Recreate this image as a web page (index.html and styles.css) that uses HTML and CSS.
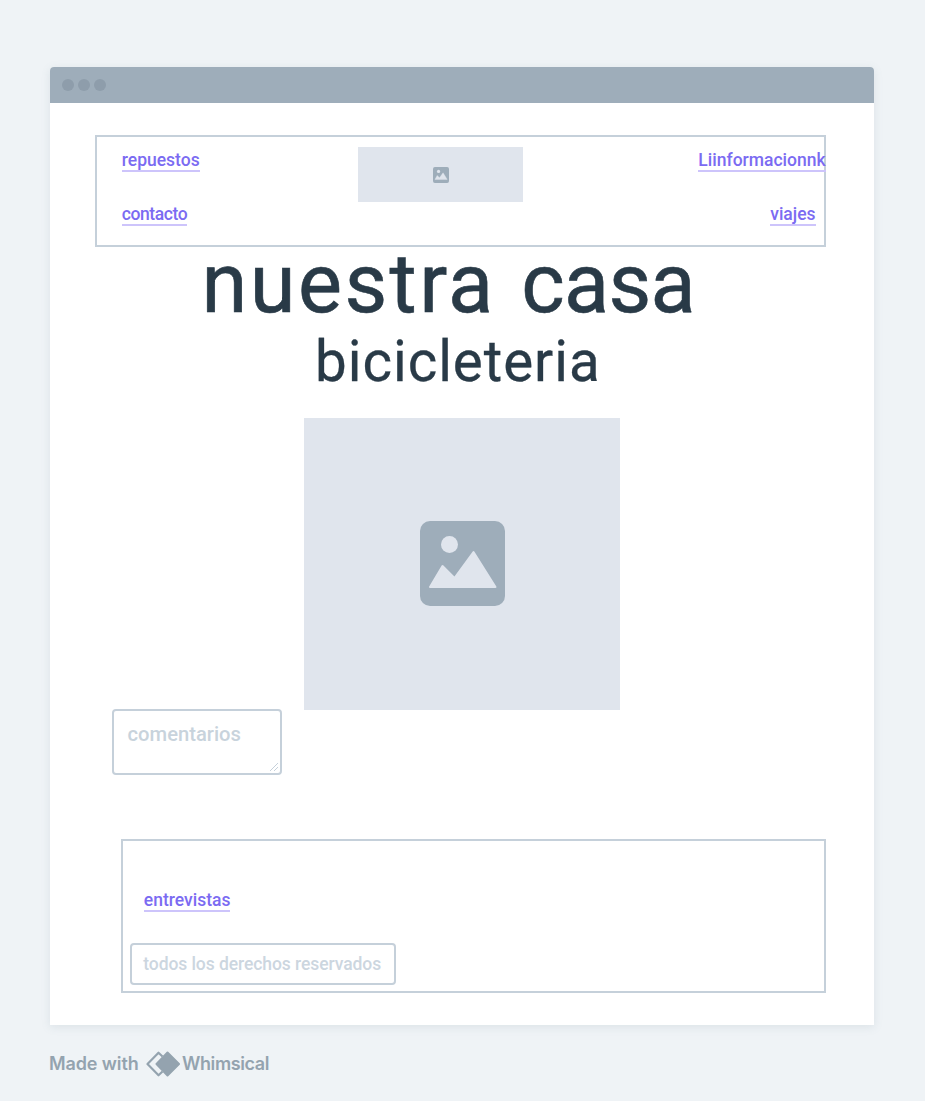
FILE: index.html
```html
<!DOCTYPE html>
<html lang="es">
<head>
<meta charset="utf-8">
<title>nuestra casa bicicleteria</title>
<link rel="stylesheet" href="styles.css">
</head>
<body>
<div class="window">
  <div class="titlebar"><span class="dot"></span><span class="dot"></span><span class="dot"></span></div>
  <main class="page">
    <nav class="nav">
      <div class="links-left">
        <a class="link repuestos">repuestos</a>
        <a class="link contacto">contacto</a>
      </div>
      <div class="logo-image">
        <svg class="icon-small" viewBox="0 0 85 85"><rect width="85" height="85" rx="10" fill="#9eadba"/><circle cx="29.500" cy="23.500" r="8.500" fill="#e0e5ed"/><path d="M10 66 L22.500 45 L34.500 57 L53.500 31 L75.500 66 Z" fill="#e0e5ed" stroke="#e0e5ed" stroke-width="2" stroke-linejoin="round"/></svg>
      </div>
      <div class="links-right">
        <a class="link info">Liinformacionnk</a>
        <a class="link viajes">viajes</a>
      </div>
    </nav>
    <h1 class="title"><span class="wide">nuestra</span> <span class="tight">casa</span></h1>
    <h2 class="subtitle">bicicleteria</h2>
    <div class="hero-image">
      <svg class="icon-large" viewBox="0 0 85 85"><rect width="85" height="85" rx="10" fill="#9eadba"/><circle cx="29.500" cy="23.500" r="8.500" fill="#e0e5ed"/><path d="M10 66 L22.500 45 L34.500 57 L53.500 31 L75.500 66 Z" fill="#e0e5ed" stroke="#e0e5ed" stroke-width="2" stroke-linejoin="round"/></svg>
    </div>
    <div class="comments">
      <span class="comments-text">comentarios</span>
      <svg class="grip" viewBox="0 0 10 10"><path d="M1 9 L9 1 M5 9 L9 5" stroke="#c6d1db" stroke-width="1" fill="none"/></svg>
    </div>
    <footer class="footer">
      <a class="link entrevistas">entrevistas</a>
      <div class="rights">todos los derechos reservados</div>
    </footer>
  </main>
</div>
<div class="credit">
  <span class="made">Made with</span>
  <svg class="mark" viewBox="0 0 34 26"><path d="M16.500 5.500 L12.500 1.700 L1.500 13 L12.500 24.300 L16.500 20.500" fill="none" stroke="#94a3af" stroke-width="2.200" stroke-linejoin="round"/><path d="M21.500 1.500 L33 13 L21.500 24.500 L10.500 13 Z" fill="#94a3af" stroke="#94a3af" stroke-width="2" stroke-linejoin="round"/></svg>
  <span class="brand">Whimsical</span>
</div>
</body>
</html>
```
FILE: styles.css
```css
* { box-sizing: border-box; }
body {
  margin: 0;
  padding: 66.500px 50.400px 0;
  height: 1101px;
  background: #eff3f6;
  font-family: Roboto, "Liberation Sans", sans-serif;
}
svg { display: block; }
.window {
  width: 824px;
  height: 958.500px;
  background: #fff;
  border-radius: 4px 4px 0 0;
  box-shadow: 0 2px 10px rgba(100, 125, 145, 0.14);
}
.titlebar {
  display: flex;
  align-items: center;
  gap: 4px;
  height: 36px;
  padding-left: 12.100px;
  background: #9eadba;
  border-radius: 4px 4px 0 0;
}
.dot { width: 12px; height: 12px; border-radius: 50%; background: #8e9dab; }
.page { display: flex; flex-direction: column; padding: 32.900px 48.500px 0 44.200px; }
.nav {
  display: flex;
  justify-content: space-between;
  width: 731.500px;
  height: 111.400px;
  padding-top: 10px;
  border: 2px solid #c5d0da;
}
.links-left, .links-right { display: flex; flex-direction: column; gap: 32px; padding-top: 3px; }
.links-left { align-items: flex-start; width: 236px; padding-left: 25.200px; }
.links-right { align-items: flex-end; width: 236px; padding-right: 8.500px; }
.link {
  height: 22px;
  line-height: 21px;
  font-size: 17.500px;
  font-weight: 500;
  white-space: nowrap;
  color: #7b6bf2;
  border-bottom: 2px solid #cdc4fb;
}
.contacto { letter-spacing: -0.400px; }
.info { margin-right: -10px; }
.logo-image {
  display: grid;
  place-items: center;
  width: 165px;
  height: 55px;
  margin-right: 39px;
  background: #e0e5ed;
}
.icon-small { width: 16px; height: 16px; }
.title, .subtitle { margin: 0; font-weight: 400; color: #293a47; white-space: nowrap; }
.title {
  height: 82px;
  padding-left: 107px;
  font-size: 83px;
  line-height: 73px;
  -webkit-text-stroke: 0.600px #293a47;
}
.wide { letter-spacing: 2.400px; }
.tight { margin-left: 5px; letter-spacing: -0.700px; }
.subtitle {
  height: 89.200px;
  padding-left: 220.500px;
  font-size: 56.500px;
  line-height: 66px;
  letter-spacing: 0.950px;
  -webkit-text-stroke: 0.300px #293a47;
}
.hero-image {
  display: grid;
  place-items: center;
  width: 316px;
  height: 292px;
  margin-left: 209.800px;
  background: #e0e5ed;
}
.icon-large { width: 85px; height: 85px; }
.comments {
  display: flex;
  justify-content: space-between;
  width: 170px;
  height: 66px;
  margin: -1px 0 0 17px;
  padding: 9px 1px 1px 14px;
  border: 2px solid #c5d0da;
  border-radius: 4px;
}
.comments-text { color: #c8d3dc; font-size: 20.200px; line-height: 28px; font-weight: 500; }
.grip { width: 10px; height: 10px; align-self: flex-end; }
.footer {
  display: flex;
  flex-direction: column;
  align-items: flex-start;
  width: 705.500px;
  height: 154px;
  margin: 64px 0 0 26.200px;
  padding: 49.500px 0 0 7px;
  border: 2px solid #c5d0da;
}
.entrevistas { margin-left: 14px; }
.rights {
  width: 266px;
  height: 42px;
  margin-top: 30.500px;
  padding-left: 11.500px;
  border: 2px solid #c5d0da;
  border-radius: 4px;
  color: #ccd6df;
  font-size: 17.500px;
  font-weight: 500;
  letter-spacing: -0.080px;
  line-height: 38px;
  white-space: nowrap;
}
.credit {
  display: flex;
  align-items: center;
  height: 26px;
  margin: 26px 0 0 -1.400px;
  color: #94a3af;
  font: 600 18px/26px Inter, sans-serif;
}
.made { width: 97px; white-space: nowrap; letter-spacing: -0.100px; }
.mark { width: 34px; height: 26px; margin-right: 2px; }
.brand { letter-spacing: -0.400px; }
```
